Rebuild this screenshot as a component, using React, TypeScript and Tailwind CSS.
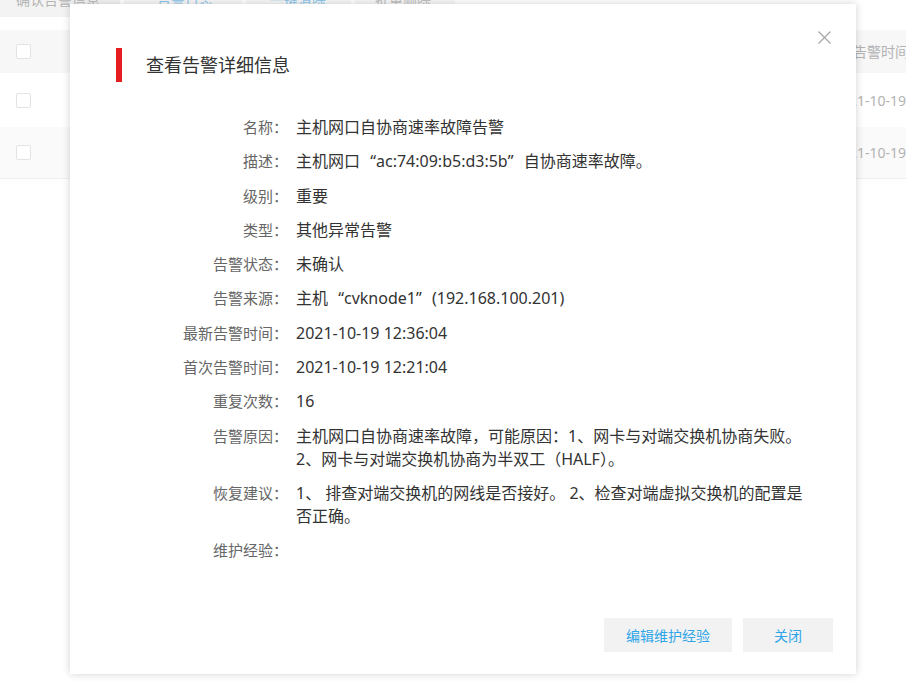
import React from "react";

const rows: { label: string; value: React.ReactNode }[] = [
  { label: "名称：", value: "主机网口自协商速率故障告警" },
  {
    label: "描述：",
    value: (
      <>
        主机网口<Q open>“</Q>ac:74:09:b5:d3:5b<Q>”</Q>自协商速率故障。
      </>
    ),
  },
  { label: "级别：", value: "重要" },
  { label: "类型：", value: "其他异常告警" },
  { label: "告警状态：", value: "未确认" },
  {
    label: "告警来源：",
    value: (
      <>
        主机<Q open>“</Q>cvknode1<Q>”</Q>(192.168.100.201)
      </>
    ),
  },
  { label: "最新告警时间：", value: "2021-10-19 12:36:04" },
  { label: "首次告警时间：", value: "2021-10-19 12:21:04" },
  { label: "重复次数：", value: "16" },
  {
    label: "告警原因：",
    value: (
      <>
        主机网口自协商速率故障，可能原因：1、网卡与对端交换机协商失败。
        <br />
        2、网卡与对端交换机协商为半双工（HALF）。
      </>
    ),
  },
  {
    label: "恢复建议：",
    value: (
      <>
        1、 排查对端交换机的网线是否接好。 2、检查对端虚拟交换机的配置是
        <br />
        否正确。
      </>
    ),
  },
  { label: "维护经验：", value: "" },
];

// full-width curly quotes, like the CJK font in the screenshot
function Q({ children, open }: { children: React.ReactNode; open?: boolean }) {
  return (
    <span className={open ? "inline-block w-[1em] text-right" : "inline-block w-[1em] text-left"}>
      {children}
    </span>
  );
}

function Checkbox() {
  return <div className="w-[15px] h-[15px] border border-[#e3e3e3] rounded-[2px] bg-white" />;
}

export default function App() {
  return (
    <div className="relative w-[906px] h-[684px] overflow-hidden bg-white font-['Noto_Sans','Noto_Sans_CJK_SC',sans-serif]">
      {/* page behind the dialog */}
      <div className="flex gap-[4px] -mt-[17px] h-[34px] text-[14px]">
        <div className="w-[120px] bg-[#f3f3f3] text-[#b5b5b5] pl-[16px] leading-[34px]">确认告警信息</div>
        <div className="w-[118px] bg-[#f7f7f7] text-[#8cc7ec] pl-[33px] leading-[34px]">告警日志</div>
        <div className="w-[105px] bg-[#f7f7f7] text-[#8cc7ec] pl-[24px] leading-[34px]">一键清除</div>
        <div className="w-[100px] bg-[#f7f7f7] text-[#c0c0c0] pl-[20px] leading-[34px]">批量删除</div>
      </div>
      <div className="mt-[13px] text-[14px] text-[#b3b3b3]">
        <div className="flex items-center h-[43px] bg-[#f7f7f7] pl-[16px]">
          <Checkbox />
          <span className="ml-auto w-[53px] whitespace-nowrap overflow-hidden">告警时间</span>
        </div>
        <div className="flex items-center h-[54px] pl-[16px]">
          <Checkbox />
          <span className="ml-auto w-[73px] whitespace-nowrap">2021-10-19</span>
        </div>
        <div className="flex items-center h-[52px] bg-[#fafafa] pl-[16px] border-b border-[#efefef]">
          <Checkbox />
          <span className="ml-auto w-[73px] whitespace-nowrap">2021-10-19</span>
        </div>
      </div>

      {/* dialog */}
      <div className="absolute left-[70px] top-[4px] w-[786px] h-[670px] bg-white shadow-[0_0_8px_rgba(0,0,0,0.18)] flex flex-col">
        <button className="absolute left-[748px] top-[27px] w-[13px] h-[13px] text-[#a6a6a6]">
          <svg viewBox="0 0 13 13" width="13" height="13" stroke="currentColor" strokeWidth="1.2" fill="none">
            <path d="M0.5 0.5 L12.5 12.5 M12.5 0.5 L0.5 12.5" />
          </svg>
        </button>

        <div className="flex items-center mt-[44px] pl-[46px]">
          <div className="w-[6px] h-[34px] bg-[#e41e20]" />
          <div className="ml-[24px] text-[18px] text-[#333]">查看告警详细信息</div>
        </div>

        <div className="grid grid-cols-[218px_540px] gap-x-[8px] gap-y-[11.3px] mt-[34px] leading-[23px]">
          {rows.map((r) => (
            <React.Fragment key={r.label}>
              <div className="text-right text-[15px] text-[#666]">{r.label}</div>
              <div className="text-[16px] text-[#333]">{r.value}</div>
            </React.Fragment>
          ))}
        </div>

        <div className="mt-auto flex justify-end gap-[11px] pr-[23px] pb-[22px] text-[14px] text-[#2ea6e8]">
          <button className="w-[128px] h-[34px] bg-[#f2f2f2]">编辑维护经验</button>
          <button className="w-[90px] h-[34px] bg-[#f2f2f2]">关闭</button>
        </div>
      </div>
    </div>
  );
}
